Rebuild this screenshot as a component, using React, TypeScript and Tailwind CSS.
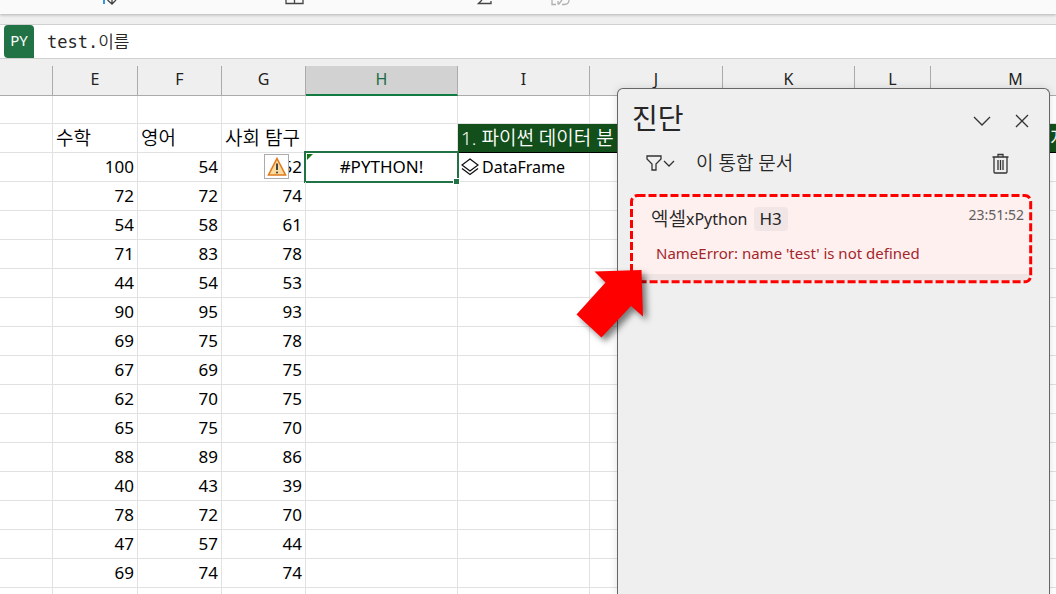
import { useState } from "react"

const columns = [
    { name: "D", label: "", width: "w-[53px]" },
    { name: "E", label: "E", width: "w-[85px]" },
    { name: "F", label: "F", width: "w-[84px]" },
    { name: "G", label: "G", width: "w-[84px]" },
    { name: "H", label: "H", width: "w-[152px]" },
    { name: "I", label: "I", width: "w-[132px]" },
    { name: "J", label: "J", width: "w-[133px]" },
    { name: "K", label: "K", width: "w-[132px]" },
    { name: "L", label: "L", width: "w-[76px]" },
    { name: "M", label: "M", width: "w-[170px]" },
]

const scores = [
    [100, 54, 52],
    [72, 72, 74],
    [54, 58, 61],
    [71, 83, 78],
    [44, 54, 53],
    [90, 95, 93],
    [69, 75, 78],
    [67, 69, 75],
    [62, 70, 75],
    [65, 75, 70],
    [88, 89, 86],
    [40, 43, 39],
    [78, 72, 70],
    [47, 57, 44],
    [69, 74, 74],
    [null, null, null],
]

const cell = "border-r border-b border-[#e1e1e1] p-0"
const banner = "border-b border-black bg-[#124f1a] p-0 text-[19px] text-white whitespace-nowrap"

function Ribbon() {
    return (
        <div className="flex h-[14px] shrink-0 items-start overflow-hidden bg-[#fafafa] pl-[102px] shadow-[0_1px_3px_#b0b0b0]">
            <button className="w-[183px]" aria-label="Sort">
                <svg width="15" height="5" viewBox="0 0 15 5" fill="none">
                    <path d="M2 0V4" stroke="#3a96dd" strokeWidth="2" />
                    <path d="M10 0V4M5.500 0L10 4L14 0" stroke="#444" strokeWidth="1.300" />
                </svg>
            </button>
            <button className="w-[192px]" aria-label="Table">
                <svg width="19" height="5" viewBox="0 0 19 5" fill="none">
                    <path d="M1 0V3.500H18V0M9.500 0V3.500" stroke="#444" strokeWidth="1.300" />
                </svg>
            </button>
            <button className="w-[74px]" aria-label="Sum">
                <svg width="15" height="5" viewBox="0 0 15 5" fill="none">
                    <path d="M5 0L1.500 3.500H14V1" stroke="#444" strokeWidth="1.300" />
                </svg>
            </button>
            <button aria-label="Recalculate">
                <svg width="19" height="6" viewBox="0 0 19 6" fill="none">
                    <path d="M1 0V4.500H5M7 1V4.500M11 0L7.500 4.500M11 4.500H13C16 4.500 18 3 18 0" stroke="#b0b0b0" strokeWidth="1.300" />
                </svg>
            </button>
        </div>
    )
}

function FormulaBar() {
    const [formula, setFormula] = useState("test.이름")

    return (
        <div className="mt-[10px] flex h-[35px] shrink-0 items-center border-y border-[#d0d0d0] bg-white pl-[4px]">
            <div className="flex h-[33px] w-[30px] shrink-0 items-center justify-center rounded-l-[4px] rounded-tr-[4px] bg-[#217346] pb-[2px] text-[15px] text-white">
                PY
            </div>
            <input
                aria-label="Formula"
                value={formula}
                onChange={(e) => setFormula(e.target.value)}
                className="h-full min-w-0 flex-1 bg-transparent pb-[2px] pl-[13px] font-['DejaVu_Sans_Mono','Noto_Sans_CJK_KR',monospace] text-[17px] font-[350] text-[#262626] outline-none"
            />
        </div>
    )
}

function Warning() {
    return (
        <button aria-label="Error options" className="absolute top-[1px] left-[42px] flex h-[25px] w-[25px] items-center justify-center border border-[#ababab] bg-white">
            <svg width="20" height="20" viewBox="0 0 20 20">
                <path d="M10 1.500L18.500 18H1.500Z" fill="#fbdca0" stroke="#e07b1a" strokeWidth="1.600" />
                <path d="M10 6.500V13" stroke="#444" strokeWidth="2" />
                <circle cx="10" cy="15.500" r="1.100" fill="#444" />
            </svg>
        </button>
    )
}

function Sheet() {
    return (
        <table className="mt-[7px] w-[1101px] table-fixed border-separate border-spacing-0 text-black">
            <thead>
                <tr className="h-[30px]">
                    {columns.map((col) => (
                        <th
                            key={col.name}
                            className={
                                col.width +
                                (col.name === "H"
                                    ? " border-r border-b-2 border-r-[#ababab] border-b-[#107c41] bg-[#d2d2d2] p-0 pb-[2px] font-normal text-[#1d6b41]"
                                    : " border-r border-b border-[#ababab] p-0 pb-[3px] font-normal text-[#222]")
                            }
                        >
                            {col.label}
                        </th>
                    ))}
                </tr>
            </thead>
            <tbody>
                <tr className="h-[28px]">
                    {columns.map((col) => <td key={col.name} className={cell}></td>)}
                </tr>
                <tr className="h-[29px] text-[19px] leading-[24px] font-[350]">
                    <td className={cell}></td>
                    <td className={cell + " pl-[3px]"}>수학</td>
                    <td className={cell + " pl-[3px]"}>영어</td>
                    <td className={cell + " pl-[3px] whitespace-nowrap"}>사회 탐구</td>
                    <td className={cell}></td>
                    <td colSpan={4} className={banner + " pl-[3px]"}>1. 파이썬 데이터 분</td>
                    <td className={banner + " pl-[119px]"}>지</td>
                </tr>
                {scores.map((row, i) => (
                    <tr key={i} className="h-[29px] text-[17px] leading-[24px]">
                        <td className={cell}></td>
                        <td className={cell + " pr-[3px] text-right"}>{row[0]}</td>
                        <td className={cell + " pr-[3px] text-right"}>{row[1]}</td>
                        <td className={cell + " relative pr-[3px] text-right"}>
                            {row[2]}
                            {i === 0 && <Warning />}
                        </td>
                        {i === 0 ? (
                            <td className={cell + " relative text-center"}>
                                #PYTHON!
                                {/* selection frame */}
                                <div className="absolute -inset-x-[2px] -top-[2px] -bottom-[2px] border-2 border-[#217346]"></div>
                                <div className="absolute -right-[3px] -bottom-[4px] z-10 size-[7px] border border-white bg-[#217346]"></div>
                                <svg className="absolute top-[1px] left-[1px]" width="6" height="6">
                                    <path d="M0 0H6L0 6Z" fill="#107c10" />
                                </svg>
                            </td>
                        ) : (
                            <td className={cell}></td>
                        )}
                        <td className={cell}>
                            {i === 0 && (
                                <div className="flex items-center gap-[3px] pl-[3px] text-base leading-[24px]">
                                    <svg width="18" height="18" viewBox="0 0 18 18" fill="none" stroke="#111" strokeWidth="1.300">
                                        <path d="M9 1L17 7L9 13L1 7Z" />
                                        <path d="M1 10.500L9 16.500L17 10.500" />
                                    </svg>
                                    DataFrame
                                </div>
                            )}
                        </td>
                        <td className={cell}></td>
                        <td className={cell}></td>
                        <td className={cell}></td>
                        <td className={cell}></td>
                    </tr>
                ))}
            </tbody>
        </table>
    )
}

function Diagnostics() {
    return (
        <aside className="absolute top-[88px] right-[6px] bottom-0 w-[433px] rounded-t-[6px] border border-b-0 border-[#666] bg-[#efefef] pr-[17px] pl-[12px] text-[#262626] shadow-[0_0_8px_#00000020]">
            <div className="flex h-[58px] items-center pl-[2px]">
                <h2 className="flex-1 text-[28px]">진단</h2>
                <div className="-mr-[2px] flex gap-[16px] pt-[5px]">
                    <button aria-label="Collapse" className="flex size-6 items-center justify-center">
                        <svg width="18" height="10" viewBox="0 0 18 10" fill="none" stroke="#333" strokeWidth="1.300">
                            <path d="M1 1L9 9L17 1" />
                        </svg>
                    </button>
                    <button aria-label="Close" className="flex size-6 items-center justify-center">
                        <svg width="14" height="14" viewBox="0 0 14 14" fill="none" stroke="#333" strokeWidth="1.300">
                            <path d="M1 1L13 13M13 1L1 13" />
                        </svg>
                    </button>
                </div>
            </div>

            <div className="flex h-[32px] items-center pl-[16px]">
                <button aria-label="Filter" className="flex items-center gap-[1px]">
                    <svg width="16" height="16" viewBox="0 0 16 16" fill="none" stroke="#333" strokeWidth="1.300">
                        <path d="M1 1H15V4L10 9V15H6V9L1 4Z" />
                    </svg>
                    <svg width="12" height="7" viewBox="0 0 12 7" fill="none" stroke="#333" strokeWidth="1.300">
                        <path d="M1 1L6 6L11 1" />
                    </svg>
                </button>
                <span className="flex-1 pl-[21px] text-[19px] font-[350]">이 통합 문서</span>
                <button aria-label="Clear" className="mr-[23px]">
                    <svg width="17" height="21" viewBox="0 0 17 21" fill="none" stroke="#333" strokeWidth="1.300">
                        <path d="M0.500 4H16.500M2 4V19Q2 20 3 20H14Q15 20 15 19V4M6 3.500V1.500H11V3.500" />
                        <path d="M6 7V17M8.500 7V17M11 7V17" />
                    </svg>
                </button>
            </div>

            <div className="relative mt-[15px] h-[89px] p-[2px]">
                <div className="h-full rounded-[4px] border-b-[7px] border-[#f0e3e3] bg-[#fff0f0] pt-[10px] pr-[6px] pl-[19px]">
                    <div className="flex h-[26px] items-center">
                        <span className="text-[19px] font-[350]">엑셀</span>
                        <span>xPython</span>
                        <span className="ml-[6px] flex h-[24px] items-center rounded-[4px] bg-[#f1e5e5] px-[6px] text-[17px]">H3</span>
                        <time className="ml-auto pb-[8px] text-sm text-[#605e5c]">23:51:52</time>
                    </div>
                    <p className="pt-[10px] pl-[5px] text-[15px] leading-[22px] text-[#a4262c]">NameError: name 'test' is not defined</p>
                </div>
                <svg className="absolute inset-0 h-full w-full overflow-visible">
                    <rect x="1.500" y="1.500" width="99.300%" height="97%" rx="6" fill="none" stroke="#fe0000" strokeWidth="3" strokeDasharray="8 3" />
                </svg>
                {/* arrow pointing at the error */}
                <svg className="absolute top-[72px] -left-[56px] overflow-visible drop-shadow-[4px_4px_3px_#00000080]" width="72" height="72">
                    <path d="M67.500 4L20.500 5.500L31.500 16.500L2.500 48.500L27.500 71.500L57 40L69 50.500Z" fill="#fe0000" />
                </svg>
            </div>
        </aside>
    )
}

function App() {
    return (
        <div className="relative flex h-screen flex-col overflow-hidden bg-[#efefef] font-['Noto_Sans','Noto_Sans_CJK_KR',sans-serif] text-base">
            <Ribbon />
            <FormulaBar />
            <main className="flex-1 overflow-hidden">
                <div className="[&_tbody]:bg-white">
                    <Sheet />
                </div>
            </main>
            <Diagnostics />
        </div>
    )
}

export default App
